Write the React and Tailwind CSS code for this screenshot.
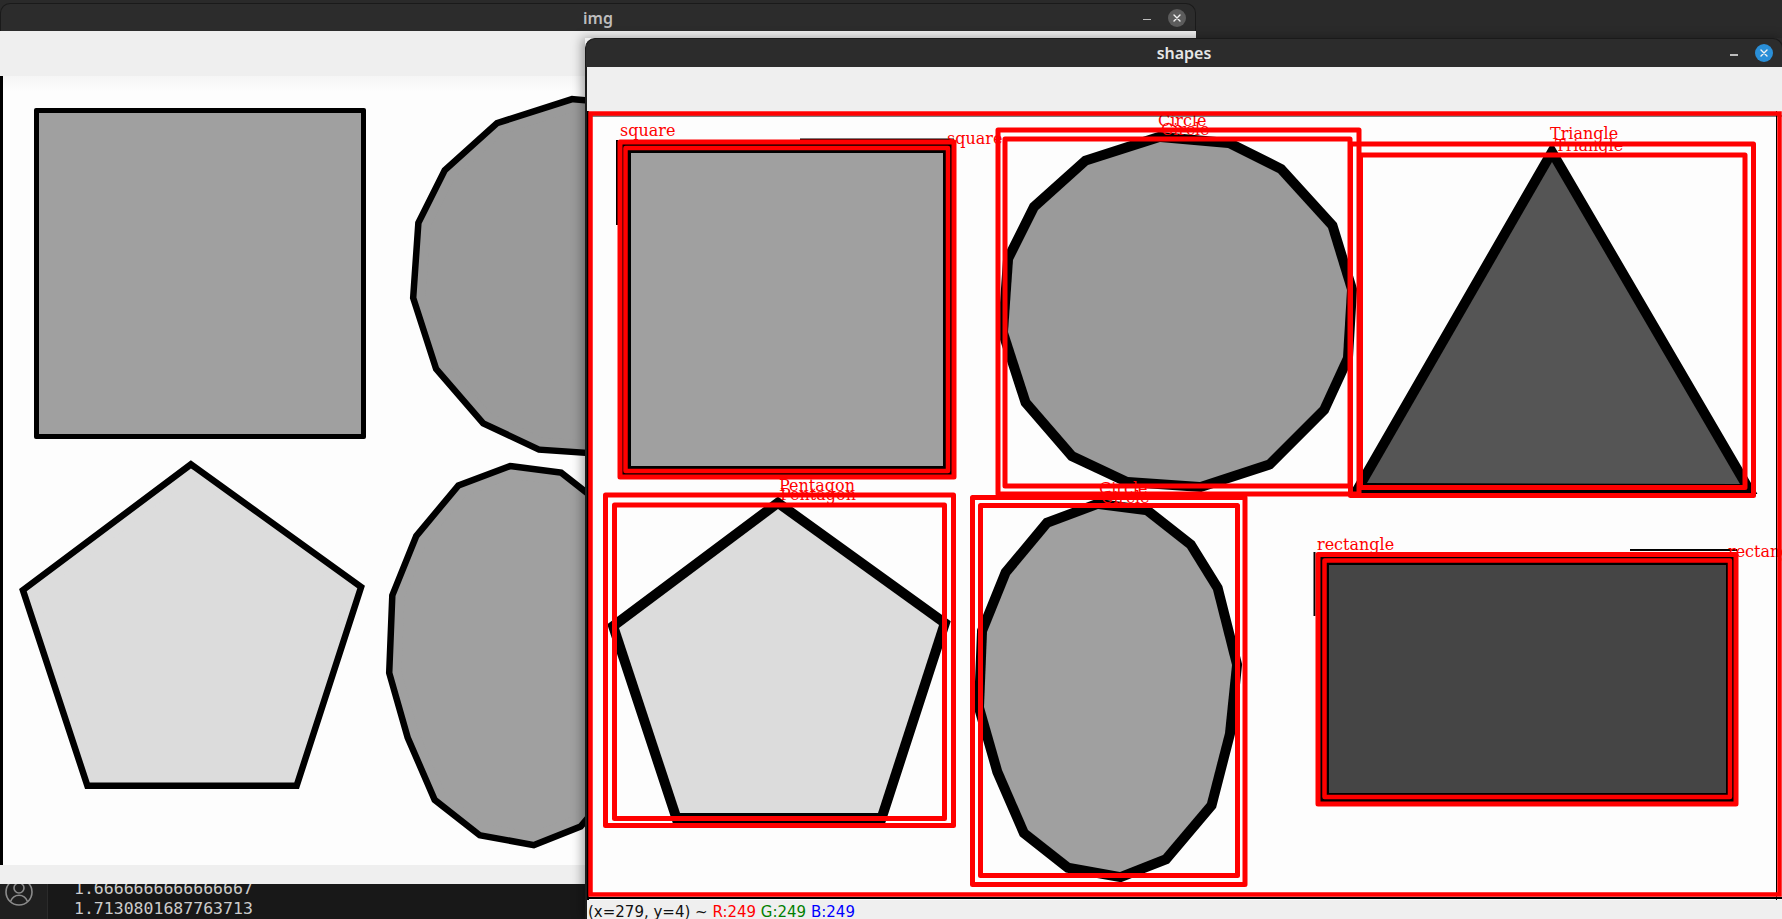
import React from 'react'

const IMG_W = 1196
const IMG_H = 789

const CIRCLE = [[573, 31], [641, 37], [691, 62], [741, 117], [760, 179], [756, 246], [733, 296], [680, 349], [613, 371], [541, 366], [488, 341], [443, 289], [421, 221], [426, 149], [451, 99], [501, 54]]
const ELLIPSE = [[511, 398], [558, 404], [600, 437], [626, 479], [645, 554], [638, 622], [620, 692], [576, 744], [533, 761], [483, 752], [441, 719], [415, 659], [397, 596], [400, 521], [423, 464], [463, 416]]
const PENTAGON = [[191, 398], [352, 514], [291, 702], [93, 702], [32, 517]]
const TRIANGLE = [[965, 51], [1153, 373], [780, 372]]

const POLYS = [
  { p: CIRCLE, fill: '#9a9a9a' },
  { p: TRIANGLE, fill: '#555555' },
  { p: PENTAGON, fill: '#dcdcdc' },
  { p: ELLIPSE, fill: '#a0a0a0' },
]

// bounding boxes drawn by the detector: [x, y, w, h, stroke]
const BOXES = [
  [33, 31, 334, 335, 5], [38.5, 37, 322.5, 323, 4.5],
  [411, 19, 361, 364, 5], [418, 28, 345, 347, 5],
  [763.5, 33, 403, 351.5, 5], [773.5, 44, 384.5, 332.5, 5],
  [18.5, 384, 348, 330.5, 5], [27.5, 394, 330, 313.5, 5],
  [385.5, 386.5, 272.5, 387, 5], [393.5, 394.5, 257, 370, 5],
  [731, 443.5, 418, 249.5, 5], [737.5, 449.5, 405.5, 236.5, 4.5],
]

const LABELS = [
  ['square', 33, 25], ['square', 360, 33],
  ['Circle', 571, 15], ['Circle', 574, 24],
  ['Triangle', 963, 28], ['Triangle', 968, 40],
  ['Pentagon', 192, 380], ['Pentagon', 193, 389],
  ['Circle', 512, 383], ['Circle', 514, 392],
  ['rectangle', 730, 439], ['rectangle', 1141, 446],
]

const pts = (p) => p.map(([x, y]) => `${x},${y}`).join(' ')

function Picture({ annotated }) {
  return (
    <svg width={IMG_W} height={IMG_H} viewBox={`0 0 ${IMG_W} ${IMG_H}`} className="block">
      <defs>
        <linearGradient id="toolbar-shade" x1="0" y1="0" x2="0" y2="1">
          <stop offset="0" stopColor="#f5f5f5" />
          <stop offset="1" stopColor="#fdfdfd" />
        </linearGradient>
      </defs>
      <rect width={IMG_W} height={IMG_H} fill="#fdfdfd" />
      {!annotated && <rect width={IMG_W} height="16" fill="url(#toolbar-shade)" />}
      {!annotated && <rect x="0" y="0" width="3" height={IMG_H} fill="#000" />}

      {/* square + rectangle */}
      {annotated ? (
        <>
          <rect x="33" y="31" width="334" height="335" fill="#000" />
          <rect x="44" y="42" width="312" height="313" fill="#a0a0a0" />
          <rect x="730" y="443" width="420" height="251" fill="#000" />
          <rect x="742" y="454" width="397" height="228" fill="#454545" />
        </>
      ) : (
        <>
          <rect x="34" y="32" width="332" height="331" rx="2" fill="#000" />
          <rect x="39" y="37" width="322" height="321" fill="#a0a0a0" />
          <rect x="731" y="444" width="418" height="249" rx="2" fill="#000" />
          <rect x="736" y="449" width="408" height="239" fill="#454545" />
        </>
      )}

      {POLYS.map(({ p, fill }, i) => (
        <g key={i}>
          <polygon points={pts(p)} fill="#000" stroke="#000" strokeWidth={annotated ? 20 : 22} strokeLinejoin="miter" strokeMiterlimit="3" />
          <polygon points={pts(p)} fill={fill} stroke={annotated ? 'none' : fill} strokeWidth={annotated ? 0 : 9} strokeLinejoin="miter" />
        </g>
      ))}

      {annotated && (
        <>
          {/* leftover outline bits */}
          <line x1="213" y1="28.5" x2="367" y2="28.5" stroke="#000" strokeWidth="2" />
          <line x1="30" y1="29" x2="30" y2="114" stroke="#000" strokeWidth="2" />
          <line x1="727.5" y1="441" x2="727.5" y2="505" stroke="#000" strokeWidth="2" />
          <line x1="1043" y1="439" x2="1150" y2="439" stroke="#000" strokeWidth="2" />

          {LABELS.map(([t, x, y], i) => (
            <text key={i} x={x} y={y} fontFamily="'DejaVu Serif', serif" fontSize="16" fill="#ff0000">
              {t}
            </text>
          ))}

          {BOXES.map(([x, y, w, h, s], i) => (
            <rect key={i} x={x} y={y} width={w} height={h} fill="none" stroke="#ff0000" strokeWidth={s} strokeLinejoin="round" />
          ))}

          {/* whole-image contour */}
          <line x1="1" y1="0" x2="1" y2={IMG_H} stroke="#000" strokeWidth="2" />
          <line x1="0" y1="787" x2={IMG_W} y2="787" stroke="#000" strokeWidth="2" />
          <line x1="0" y1="5" x2={IMG_W} y2="5" stroke="#000" strokeWidth="1" />
          <line x1="1189.5" y1="0" x2="1189.5" y2={IMG_H} stroke="#000" strokeWidth="1" />
          <rect x="3.5" y="2.5" width="1189" height="781" fill="none" stroke="#ff0000" strokeWidth="4.5" />
        </>
      )}
    </svg>
  )
}

function TitleBar({ title, active, height }) {
  return (
    <div
      className={`grid grid-cols-[1fr_auto_1fr] items-center shrink-0 rounded-t-[10px] bg-[#2c2c2c] border border-b-0 border-[#1a1a1a] ${height}`}
    >
      <div />
      <span className={`text-[16px] font-semibold ${active ? 'text-[#e6e6e6]' : 'text-[#bdbdbd]'}`}>{title}</span>
      <div className="flex items-center justify-end gap-[17px] pr-[9px]">
        <span className="w-[8px] h-[1.5px] mt-[4px] bg-[#bdbdbd]" />
        <span
          className={`w-[18px] h-[18px] rounded-full flex items-center justify-center ${active ? 'bg-[#2a8fd8]' : 'bg-[#5c5c5c]'}`}
        >
          <svg width="8" height="8" viewBox="0 0 8 8">
            <path d="M1 1 L7 7 M7 1 L1 7" stroke="#f2f2f2" strokeWidth="1.4" strokeLinecap="round" />
          </svg>
        </span>
      </div>
    </div>
  )
}

export default function App() {
  return (
    <div className="relative w-[1782px] h-[919px] overflow-hidden bg-[#2a2a2a] font-['Noto_Sans',sans-serif] flex flex-col">
      <div className="flex-1" />

      {/* terminal peeking out under the windows */}
      <div className="h-[60px] flex bg-[#181818]">
        <div className="w-[48px] shrink-0 flex flex-col justify-end pb-[12px] pl-[4px] bg-[#1f1f1f] border-r border-[#2b2b2b]">
          <svg width="30" height="30" viewBox="0 0 30 30" fill="none" stroke="#8b8b8b" strokeWidth="1.6">
            <circle cx="15" cy="15" r="13" />
            <circle cx="15" cy="11" r="5" />
            <path d="M6.5 24.5c1.6-4 4.6-6.2 8.5-6.2s6.9 2.2 8.5 6.2" />
          </svg>
        </div>
        <div className="flex flex-col justify-end pl-[26px] font-['DejaVu_Sans_Mono',monospace] text-[16.5px] leading-[20px] text-[#cccccc]">
          <span>1.6666666666666667</span>
          <span>1.7130801687763713</span>
        </div>
      </div>

      {/* img window */}
      <div className="absolute left-0 top-[3px] w-[1196px] flex flex-col">
        <TitleBar title="img" height="h-[28px]" />
        <div className="h-[45px] bg-[#efefef]" />
        <div className="h-[789px] overflow-hidden">
          <Picture />
        </div>
        <div className="h-[19px] bg-[#efefef]" />
      </div>

      {/* shapes window */}
      <div className="absolute left-[585px] top-[38px] w-[1198px] flex flex-col shadow-[-3px_0_10px_rgba(0,0,0,0.35)]">
        <TitleBar title="shapes" active height="h-[29px]" />
        <div className="flex flex-col border-l-2 border-[#1c1c1c]">
          <div className="h-[44px] bg-[#efefef]" />
          <div className="h-[789px] overflow-hidden">
            <Picture annotated />
          </div>
          <div className="h-[19px] pt-[3px] px-[1px] bg-[#efefef] font-['DejaVu_Sans',sans-serif] text-[15px] leading-[19px] text-[#111] whitespace-pre">
            <span>(x=279, y=4) ~ </span>
            <span className="text-[#ff0000]">R:249</span>
            <span> </span>
            <span className="text-[#008000]">G:249</span>
            <span> </span>
            <span className="text-[#0000ff]">B:249</span>
          </div>
        </div>
      </div>
    </div>
  )
}
